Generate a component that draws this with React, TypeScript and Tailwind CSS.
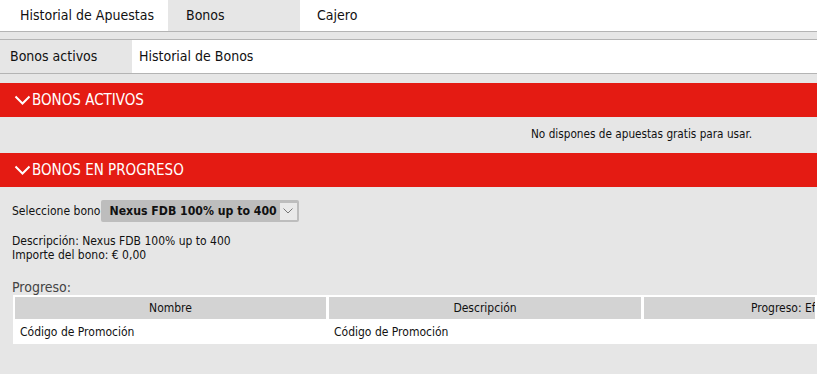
const FONT = "font-['DejaVu_Sans_Condensed','Liberation_Sans',sans-serif]";

function Chevron() {
  return (
    <svg width="17" height="10" viewBox="0 0 17 10" className="mr-px shrink-0">
      <path d="M1.5 1.5 L8.5 8.5 L15.5 1.5" fill="none" stroke="#fff" strokeWidth="2" />
    </svg>
  );
}

function SectionHeader({ title }: { title: string }) {
  return (
    <div className="flex h-[34px] items-center bg-[#e41b13] pl-[14px] text-[15px] text-white">
      <Chevron />
      <span>{title}</span>
    </div>
  );
}

export default function App() {
  return (
    <div className={`${FONT} h-[374px] w-[817px] overflow-hidden bg-[#e6e6e6] text-[#111]`}>
      <nav className="flex h-[31px] bg-white text-[14px]">
        <div className="flex w-[168px] items-center pl-[20px]">Historial de Apuestas</div>
        <div className="flex w-[132px] items-center bg-[#e6e6e6] pl-[18px]">Bonos</div>
        <div className="flex items-center pl-[17px]">Cajero</div>
      </nav>
      <div className="h-[9px] border-y border-[#b4b4b4] bg-[#e6e6e6]" />
      <div className="flex h-[34px] border-b border-[#b4b4b4] bg-white text-[14px]">
        <div className="flex w-[132px] items-center bg-[#e6e6e6] pl-[10px]">Bonos activos</div>
        <div className="flex items-center pl-[7px]">Historial de Bonos</div>
      </div>

      <div className="h-[9px]" />
      <SectionHeader title="BONOS ACTIVOS" />
      <div className="flex h-[36px] items-center pl-[531px] text-[11.7px]">
        No dispones de apuestas gratis para usar.
      </div>
      <SectionHeader title="BONOS EN PROGRESO" />

      <div className="pl-[12px] pt-[13px] text-[12px]">
        <div className="flex items-center gap-[1px]">
          <span>Seleccione bono</span>
          <div className="flex h-[22px] items-center rounded-[2px] bg-[#bdbdbd] pl-[8px] pr-[2px]">
            <span className="text-[12.2px] font-bold">Nexus FDB 100% up to 400</span>
            <span className="ml-[3px] flex h-[17px] w-[17px] items-center justify-center bg-[#e9e9e9]">
              <svg width="10" height="6" viewBox="0 0 10 6">
                <path d="M0.5 0.5 L5 5 L9.5 0.5" fill="none" stroke="#777" strokeWidth="1" />
              </svg>
            </span>
          </div>
        </div>
        <div className="mt-[12px] leading-[14px]">
          <div>Descripción: Nexus FDB 100% up to 400</div>
          <div>Importe del bono: € 0,00</div>
        </div>
        <div className="mt-[17px] text-[14px] leading-[16px] text-[#444]">Progreso:</div>
      </div>

      <div className="ml-[13px] bg-white p-[2px] text-[12px]">
        <div className="grid grid-cols-[311px_312px_1fr] gap-x-[3px]">
          <div className="flex h-[22px] items-center justify-center bg-[#d3d3d3]">Nombre</div>
          <div className="flex h-[22px] items-center justify-center bg-[#d3d3d3]">Descripción</div>
          <div className="flex h-[22px] items-center overflow-hidden whitespace-nowrap bg-[#d3d3d3] pl-[107px]">
            Progreso: Efectivo
          </div>
          <div className="flex h-[23px] items-center pl-[5px] pt-[3px]">Código de Promoción</div>
          <div className="flex h-[23px] items-center pl-[5px] pt-[3px]">Código de Promoción</div>
          <div className="h-[23px]" />
        </div>
      </div>
    </div>
  );
}
